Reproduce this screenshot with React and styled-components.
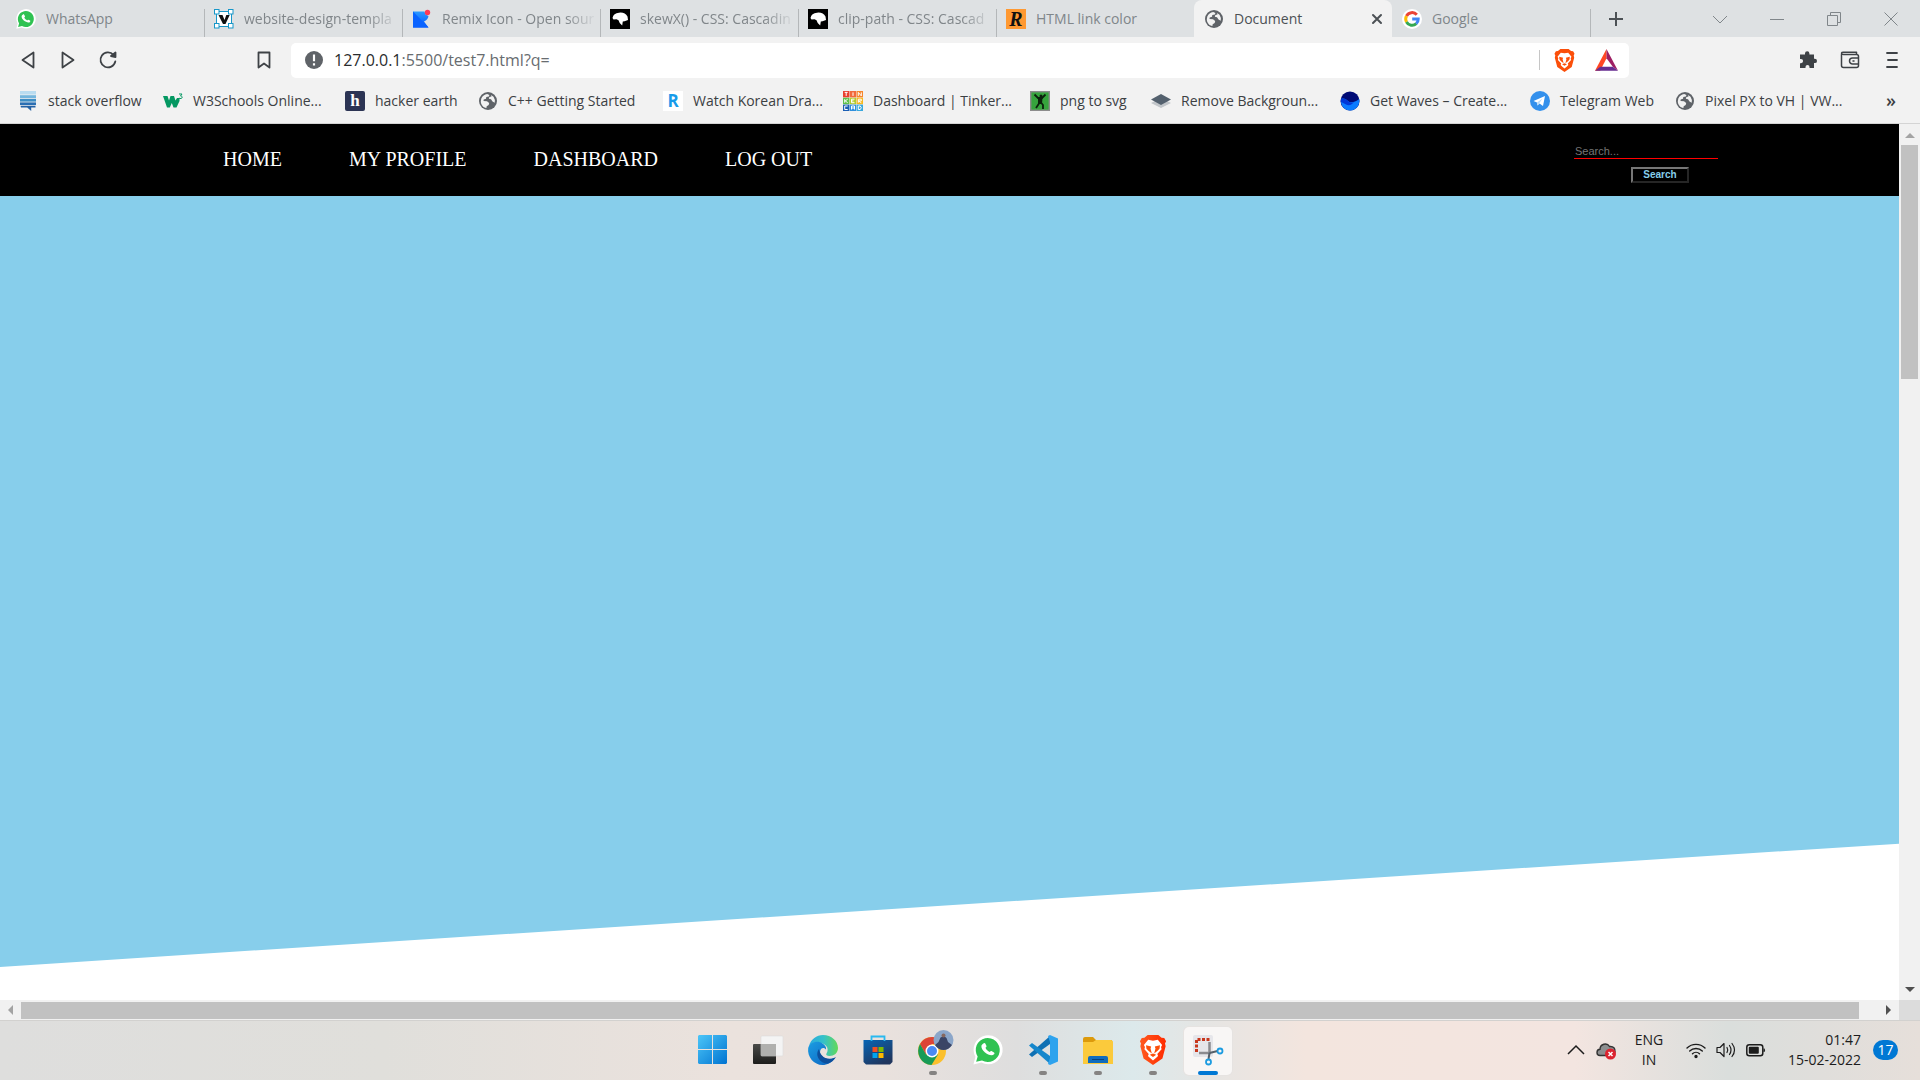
import React from "react";
import styled, { createGlobalStyle, css } from "styled-components";

const Global = createGlobalStyle`
  * { box-sizing: border-box; }
  html, body, #root { height: 100%; margin: 0; }
  body { overflow: hidden; background: #fff; }
  button { font: inherit; color: inherit; border: 0; padding: 0; background: none; }
  a { color: inherit; text-decoration: none; }
  svg { display: block; flex: none; overflow: visible; }
`;

const ui = css`font-family: "Segoe UI", "Open Sans", "Noto Sans", sans-serif;`;

const Screen = styled.div`
  display: flex;
  flex-direction: column;
  height: 100vh;
`;

/* ---------- browser chrome ---------- */
const TabBar = styled.header`
  ${ui}
  display: flex;
  align-items: stretch;
  height: 37px;
  padding: 0 1px 0 6px;
  background: #dee1e3;
  color: #80868a;
`;
const TabStrip = styled.nav`
  display: grid;
  grid-template-columns: repeat(8, minmax(0, 1fr));
  flex: 0 1 1584px;
  min-width: 0;
`;
const Tab = styled.div`
  display: flex;
  align-items: center;
  gap: 10px;
  min-width: 0;
  padding: 0 ${(p) => (p.$active ? 9 : 3)}px 0 10px;
  border-radius: ${(p) => (p.$active ? "8px 8px 0 0" : "0")};
  background: ${(p) => (p.$active ? "#f2f2f2" : "transparent")};
  color: ${(p) => (p.$active ? "#4c5155" : "inherit")};
  position: relative;
  &::after {
    content: "";
    display: ${(p) => (p.$line ? "block" : "none")};
    position: absolute;
    right: -1px;
    top: 9px;
    bottom: 0;
    width: 1px;
    background: #b4b7b9;
  }
`;
const TabTitle = styled.button`
  flex: 1;
  min-width: 0;
  overflow: hidden;
  white-space: nowrap;
  text-align: left;
  font-size: 14px;
  line-height: 22px;
  font-weight: ${(p) => (p.$active ? 500 : 400)};
  mask-image: ${(p) => (p.$fade ? "linear-gradient(90deg, #000 80%, transparent)" : "none")};
`;
const CloseTab = styled.button`
  display: flex;
`;
const NewTab = styled.button`
  display: grid;
  place-items: center;
  width: 52px;
`;
const WindowControls = styled.div`
  display: flex;
  margin-left: auto;
`;
const WindowButton = styled.button`
  display: grid;
  place-items: center;
  width: 57px;
`;

const Toolbar = styled.div`
  ${ui}
  display: flex;
  align-items: center;
  height: 46px;
  padding: 0 8px;
  background: #f2f2f2;
  color: #3e4246;
`;
const ToolButton = styled.button`
  display: grid;
  place-items: center;
  width: 40px;
  height: 36px;
`;
const BookmarkButton = styled(ToolButton)`
  margin-left: 116px;
`;
const AddressBar = styled.div`
  display: flex;
  align-items: center;
  flex: 0 1 1338px;
  height: 35px;
  margin-left: 7px;
  padding: 0 3px 0 14px;
  border-radius: 5px;
  background: #fff;
`;
const Url = styled.div`
  flex: 1;
  margin-left: 11px;
  font-size: 16px;
  line-height: 24px;
  color: #686c70;
  white-space: nowrap;
`;
const Host = styled.span`
  color: #2a2c2e;
`;
const Divider = styled.i`
  width: 1px;
  height: 20px;
  margin-right: 4px;
  background: #c6c6c6;
`;
const Shields = styled.div`
  display: flex;
  gap: 2px;
`;
const Extensions = styled.div`
  display: flex;
  gap: 2px;
  margin-left: auto;
`;

const Bookmarks = styled.nav`
  ${ui}
  display: flex;
  align-items: center;
  height: 41px;
  padding: 0 24px 4px 18px;
  background: #f2f2f2;
  border-bottom: 1px solid #d4d4d4;
  color: #3c4043;
  font-size: 14px;
  line-height: 20px;
`;
const Bookmark = styled.a`
  display: flex;
  align-items: center;
  gap: 10px;
  flex: 0 0 ${(p) => p.$w}px;
  white-space: nowrap;
`;
const More = styled.button`
  display: flex;
  margin-left: auto;
  padding-bottom: 2px;
  font-size: 18px;
  font-weight: 600;
  line-height: 20px;
`;

/* ---------- page ---------- */
const Viewport = styled.div`
  flex: 1;
  min-height: 0;
  display: grid;
  grid-template-columns: minmax(0, 1fr) 21px;
  grid-template-rows: minmax(0, 1fr) 20px;
`;
const Page = styled.main`
  display: flex;
  flex-direction: column;
  overflow: hidden;
  background: #fff;
  font-family: "Liberation Serif", "Times New Roman", serif;
`;
const SiteNav = styled.nav`
  display: flex;
  flex: none;
  justify-content: space-between;
  align-items: center;
  height: 72px;
  padding: 0 181px 0 223px;
  background: #000;
`;
const Links = styled.div`
  display: flex;
  gap: 67px;
  padding-bottom: 2px;
  color: #fff;
  font-size: 20px;
  line-height: 24px;
`;
const SearchForm = styled.form`
  display: flex;
  flex-direction: column;
  align-items: center;
  gap: 8px;
  width: 144px;
  padding-top: 6px;
  font-family: "Liberation Sans", Arial, sans-serif;
`;
const SearchInput = styled.input`
  width: 100%;
  height: 16px;
  padding: 0 1px;
  border: 0;
  border-bottom: 1px solid red;
  outline: 0;
  background: transparent;
  color: #fff;
  font: 11px/14px "Liberation Sans", Arial, sans-serif;
  &::placeholder { color: #757575; }
`;
const SearchButton = styled.button`
  width: 58px;
  height: 16px;
  margin-left: 28px;
  border: 2px solid;
  border-color: #767676 #262626 #262626 #767676;
  color: skyblue;
  font-size: 10px;
  line-height: 12px;
  font-weight: 700;
`;
const Hero = styled.section`
  height: 771px;
  flex: none;
  background: skyblue;
  clip-path: polygon(0 0, 100% 0, 100% 84%, 0 100%);
`;
const Scroll = styled.div`
  display: flex;
  flex-direction: ${(p) => (p.$row ? "row" : "column")};
  align-items: center;
  justify-content: space-between;
  background: #f1f1f1;
`;
const ScrollArrow = styled.button`
  display: grid;
  place-items: center;
  flex: 0 0 21px;
  color: ${(p) => (p.$dim ? "#a3a3a3" : "#505050")};
`;
const Track = styled.div`
  flex: 1;
  display: flex;
  flex-direction: ${(p) => (p.$row ? "row" : "column")};
`;
const Thumb = styled.div`
  background: #c1c1c1;
  ${(p) => (p.$row ? "width: 99%; height: 17px;" : "height: 28%; width: 17px;")}
`;
const Corner = styled.div`
  background: #dcdcdc;
`;

/* ---------- taskbar ---------- */
const Taskbar = styled.footer`
  ${ui}
  display: grid;
  grid-template-columns: 1fr auto 1fr;
  align-items: center;
  height: 60px;
  border-top: 1px solid #d2d1cf;
  background: linear-gradient(90deg, #dededd 0, #e0dfdb 20%, #ebe2dd 38%, #e9e1dd 46%, #dedede 53%, #dce9eb 59%, #e6e5e3 63%, #f3e5de 68%, #f3e5e0 82%, #dadedc 90%, #e0dedb 95%, #e6dfda 100%);
  color: #1c1c1c;
`;
const Apps = styled.div`
  grid-column: 2;
  display: flex;
  gap: 7px;
`;
const AppButton = styled.button`
  display: flex;
  flex-direction: column;
  align-items: center;
  justify-content: space-between;
  width: 48px;
  height: 48px;
  padding-top: 8px;
  border-radius: 5px;
  background: ${(p) => (p.$on ? "#f8f6f5" : "transparent")};
  box-shadow: ${(p) => (p.$on ? "0 0 0 1px #e6e3e1" : "none")};
`;
const Mark = styled.i`
  width: ${(p) => (p.$on ? 20 : 8)}px;
  height: 4px;
  border-radius: 2px;
  background: ${(p) => (p.$on ? "#0078d4" : p.$open ? "#858382" : "transparent")};
`;
const Tray = styled.div`
  display: flex;
  align-items: center;
  justify-content: flex-end;
  padding: 0 22px 2px 0;
  font-size: 14px;
  line-height: 20px;
`;
const TrayIcon = styled.button`
  display: grid;
  place-items: center;
  width: 30px;
`;
const Lang = styled.button`
  width: 56px;
  margin-right: 4px;
  text-align: center;
`;
const Clock = styled.time`
  width: 90px;
  text-align: right;
`;
const Badge = styled.span`
  width: 25px;
  height: 20px;
  margin-left: 12px;
  border-radius: 10px;
  background: #0078d4;
  color: #fff;
  text-align: center;
  font-size: 14px;
`;

/* ---------- drawings ---------- */
const Svg = ({ s = 20, w, h, box = "0 0 20 20", children, ...r }) => (
  <svg width={w || s} height={h || s} viewBox={box} fill="none" aria-hidden="true" {...r}>{children}</svg>
);
const Stroke = (p) => <Svg stroke="currentColor" strokeWidth="1.5" strokeLinecap="round" strokeLinejoin="round" {...p} />;

const phone = "M7 5.6c.4-.5.9-.4 1.2.1l.8 1.6c.1.4-.4.9-.7 1.2.6 1.3 1.6 2.3 2.9 2.9.4-.4.7-.9 1.1-.7l1.7.9c.5.3.3.9 0 1.3-2.1 2.2-8.8-2.2-8.4-5.6.1-.7.6-1.2 1.4-1.7z";
const Whatsapp = ({ s = 20 }) => (
  <Svg s={s}>
    <path d="M.3 19.700l1.300-5.200A9.700 9.700 0 1 1 5.600 18.400z" fill="#fff" />
    <path d="M2.100 17.900l1-3.600A8 8 0 1 1 6 17z" fill="#2fc252" />
    <path d={phone} fill="#fff" />
  </Svg>
);
const Globe = () => (
  <Svg>
    <circle cx="10" cy="10" r="9" fill="#5f6368" />
    <path d="M3.300 7.500C4.400 5 6.500 3.400 9.200 3.100l2.200.9-.5 1.600-2.600.5-.3 1.700-2.300.8-.2 1.300 3.500.4 2.200 1.800-.5 2-2 1.200-.3 1.800c-3.200-.5-5.600-3.200-5.600-6.800zM13 4l2.500 1.800 1.400 3.200-.2 2.700-2.200-1.100-1.500-2.400-2.200-.4.600-1.900 2.100-.3z" fill="#f2f2f2" />
  </Svg>
);
const Vecta = () => (
  <Svg>
    <rect x="2.500" y="2.500" width="15" height="15" fill="#fff" stroke="#1797c9" />
    {[[1, 1], [15, 1], [1, 15], [15, 15]].map(([x, y]) => <rect key={x + "-" + y} x={x - 0.5} y={y - 0.5} width="4.5" height="4.5" fill="#fff" stroke="#1797c9" />)}
    <path d="M4.500 6h4l2 5 1.800-5h3.400l-4.200 9H9z" fill="#111" />
  </Svg>
);
const Remix = () => (
  <Svg>
    <defs><linearGradient id="rx" x2="0" y2="1"><stop stopColor="#2d9bff" /><stop offset="1" stopColor="#0055ff" /></linearGradient></defs>
    <path d="M1 2.500h11.500q.5 3.500 4 4.500-.5 3.500-4.500 5.500l4.500 6H1z" fill="url(#rx)" />
    <path d="M1 2.500l15.500 16H1z" fill="#0a63ff" />
    <circle cx="15.500" cy="3.500" r="2.700" fill="#ff3b57" />
  </Svg>
);
const Mdn = () => (
  <Svg>
    <rect width="20" height="20" fill="#000" />
    <path d="M2.500 9Q3.500 4 9 3.700q6-.7 8.500 3.800l.5 3.500-3.500 1.300-1.700.2-.6 4q-2.700-1.500-3.700-5.300l-2-1-3 .3z" fill="#fff" />
  </Svg>
);
const GoogleIcon = () => (
  <Svg>
    <circle cx="10" cy="10" r="10" fill="#fff" />
    <g strokeWidth="3">
      <path d="M14.800 5.700A6.300 6.300 0 0 0 4.500 7" stroke="#ea4335" />
      <path d="M4.500 7a6.300 6.300 0 0 0 0 6" stroke="#fbbc05" />
      <path d="M4.500 13a6.300 6.300 0 0 0 9.800 1.700" stroke="#34a853" />
      <path d="M10.200 10h6a6.300 6.300 0 0 1-2 4.700" stroke="#4285f4" />
    </g>
  </Svg>
);
const GlyphTile = styled.span`
  display: grid;
  place-items: center;
  flex: none;
  width: 20px;
  height: 20px;
  border-radius: ${(p) => p.$r || 0}px;
  background: ${(p) => p.$bg};
  color: ${(p) => p.$fg};
  font: ${(p) => p.$font};
`;
const Lion = ({ s = 28, flat }) => (
  <Svg s={s} box="0 0 28 28">
    <defs><linearGradient id="lion"><stop stopColor="#ff5a1f" /><stop offset="1" stopColor="#ff2b00" /></linearGradient></defs>
    <path d="M9 0h10l3 2.500 2.500.3 1.700 3-1 2.200.6 2.500-3 11.500L14 28 5.200 22 2.200 10.500 2.800 8l-1-2.200 1.700-3L6 2.500z" fill={flat ? "#fb4f0a" : "url(#lion)"} />
    <path d="M9.500 4.500l4.500.8 4.500-.8 4 4.800-1 2 .5 2-4 4.500.7 1.700-1.700 1.700L14 23.800 11 21.200l-1.700-1.700.7-1.700-4-4.500.5-2-1-2z" fill="#fff" />
    <path d="M7.500 9.500l4.800 1.200-.6 1.800 1.200 4.800-3.200-2.500-1.800-2zM20.500 9.500l-4.800 1.200.6 1.800-1.200 4.800 3.200-2.500 1.800-2zM11 18.500l3-1.200 3 1.200-3 2z" fill="#fb4f0a" />
  </Svg>
);
const Bat = () => (
  <Svg s={23}>
    <path d="M10 0L0 19h4.500L10 8z" fill="#ff4724" />
    <path d="M10 0l10 19-4.500-3.500L10 8z" fill="#9e1f63" />
    <path d="M0 19l4.500-3.500h11L20 19z" fill="#662d91" />
  </Svg>
);
const StackIcon = () => (
  <Svg>
    <path d="M2 0h16v3.500H2z" fill="#b9dcf0" /><path d="M2 4.200h16v2.800H2z" fill="#74b6dd" />
    <path d="M2 7.800h16v2.800H2z" fill="#3d8ec5" /><path d="M2 11.400h16v2.600H2z" fill="#2a6fb3" />
    <path d="M2.500 14.800h15v1.700h-4.300V20l-4-3.500H3z" fill="#2462a5" />
  </Svg>
);
const W3 = () => (
  <Svg>
    <path d="M0 5h4.500l1.500 4.500L7.500 5h3.500l1.500 4.500L14 7h2.500v3l-3 6.500h-3L8.800 12l-2 4.500H4z" fill="#059862" />
    <path d="M16 3h3l-1.500 2c1 0 1.700.5 1.700 1.300 0 1.200-2 1.700-3.200.8" stroke="#059862" strokeWidth="1" />
  </Svg>
);
const Tinker = () => {
  const c = ["#e9402f", "#f26a3c", "#f7862c", "#5fc04a", "#b4cc2f", "#f7b71d", "#1c5fb4", "#2f8fdd", "#39a8dd"];
  const glyphs = ["M0 0h3M1.500 0v3.500", "M1.500 0v3.500", "M0 3.500V0l3 3.500V0", "M0 0v3.500M3 0L.5 1.700 3 3.500", "M3 0H0v3.500h3M0 1.700h2", "M0 3.500V0h3v1.700H0l3 1.800", "M3 0H0v3.500h3", "M0 3.500V0h3v3.500M0 2h3", "M0 0h2l1 1.700-1 1.800H0z"];
  return (
    <Svg>
      {c.map((f, i) => (
        <g key={i} transform={`translate(${(i % 3) * 6.8} ${Math.floor(i / 3) * 6.8})`}>
          <rect width="6.4" height="6.4" fill={f} />
          <path d={glyphs[i]} transform="translate(1.7 1.4)" stroke="#fff" />
        </g>
      ))}
    </Svg>
  );
};
const PngSvg = () => (
  <Svg>
    <rect x=".7" y=".7" width="18.6" height="18.6" fill="#36a43d" stroke="#8c8c8c" strokeWidth="1.4" />
    <circle cx="11" cy="5" r="1.500" fill="#0b210c" />
    <path d="M4.500 3.500L8 7h4l3.500-3.500M10 7v5M10 11l-4 6M10.500 11l2.500 3v4" stroke="#0b210c" strokeWidth="1.800" />
    <path d="M8 6.500h4.500L12 13H8z" fill="#0b210c" />
  </Svg>
);
const Layers = () => (
  <Svg>
    <path d="M10 7l10 5-10 5L0 12z" fill="#c2c6ca" />
    <path d="M10 3l10 5.500L10 14 0 8.500z" fill="#54616e" />
  </Svg>
);
const Waves = () => (
  <Svg>
    <circle cx="10" cy="10" r="9.5" fill="#000b76" />
    <path d="M1 8c3-1 5 0 7 2s6 2 11.300-2c.8 6-3 11.300-9 11.500C5 19.500 0 15 1 8z" fill="#0b7bff" />
    <path d="M1 8c3-1 5 0 7 2s4 2 6 1c-2 3-5 4-8 2.500S2 11 .8 11z" fill="#0038d8" />
  </Svg>
);
const Telegram = () => (
  <Svg>
    <circle cx="10" cy="10" r="10" fill="#3390ec" />
    <path d="M3.500 10l11.500-5-2 10-3.500-2.500L7.500 14.500 7 11.500z" fill="#fff" />
    <path d="M7 11.500l5.500-4-3.500 5-1.500 2z" fill="#b9d9f7" />
  </Svg>
);
const Arrow = ({ d }) => <Svg w={10} h={10} box="0 0 10 10"><path d={d} fill="currentColor" /></Svg>;

const tabs = [
  { t: "WhatsApp", i: <Whatsapp />, line: true },
  { t: "website-design-templa", i: <Vecta />, line: true, fade: true },
  { t: "Remix Icon - Open sour", i: <Remix />, line: true, fade: true },
  { t: "skewX() - CSS: Cascadin", i: <Mdn />, line: true, fade: true },
  { t: "clip-path - CSS: Cascad", i: <Mdn />, line: true, fade: true },
  { t: "HTML link color", i: <GlyphTile $bg="#ff9932" $fg="#111" $font='italic 700 20px/20px "Liberation Serif", serif'>R</GlyphTile> },
  { t: "Document", i: <Globe />, active: true },
  { t: "Google", i: <GoogleIcon />, line: true },
];
const bookmarks = [
  ["stack overflow", <StackIcon />, 145],
  ["W3Schools Online...", <W3 />, 182],
  ["hacker earth", <GlyphTile $r={2} $bg="#2c3454" $fg="#fff" $font='700 17px/20px "Liberation Serif", serif'>h</GlyphTile>, 133],
  ["C++ Getting Started", <Globe />, 185],
  ["Watch Korean Dra...", <GlyphTile $bg="#fff" $fg="#169bea" $font='700 17px/20px "Open Sans", sans-serif'>R</GlyphTile>, 180],
  ["Dashboard | Tinker...", <Tinker />, 187],
  ["png to svg", <PngSvg />, 121],
  ["Remove Backgroun...", <Layers />, 189],
  ["Get Waves – Create...", <Waves />, 190],
  ["Telegram Web", <Telegram />, 145],
  ["Pixel PX to VH | VW...", <Globe />, 180],
];

const Win = () => (
  <Svg s={29} box="0 0 29 29">
    <defs><linearGradient id="win" x2="1" y2="1"><stop stopColor="#4cc6f8" /><stop offset="1" stopColor="#0073d1" /></linearGradient></defs>
    <path d="M1 0h13v14H0V1zM15 0h13l1 1v13H15zM0 15h14v14H1l-1-1zM15 15h14v13l-1 1H15z" fill="url(#win)" />
  </Svg>
);
const TaskView = () => (
  <Svg s={30} box="0 0 30 30">
    <defs><linearGradient id="tv" x2="0" y2="1"><stop stopColor="#4a4a48" /><stop offset="1" stopColor="#1d1d1b" /></linearGradient></defs>
    <rect y="9" width="23" height="20" rx="1" fill="url(#tv)" />
    <rect x="8" y="1" width="22" height="20" rx="1" fill="#f4f4f4" stroke="#dcdcdc" strokeWidth=".6" />
    <path d="M8 9h15v12H8z" fill="#b0b0ae" />
  </Svg>
);
const Edge = () => (
  <Svg s={30} box="0 0 30 30">
    <defs>
      <linearGradient id="e1"><stop stopColor="#2aa9e0" /><stop offset=".5" stopColor="#35c1c9" /><stop offset="1" stopColor="#62d957" /></linearGradient>
      <linearGradient id="e2" x2="1" y2="1"><stop stopColor="#1b9de2" /><stop offset="1" stopColor="#0c62c0" /></linearGradient>
    </defs>
    <path d="M1 11C3 4 8.500 0 15 0c8.500 0 15 6 15 13 0 5-4 8-8.500 8-2.500 0-4-1-3-2.500 4-6-3-12-9-10C6 9 3 10 1 11z" fill="url(#e1)" />
    <path d="M.2 13C2 7 10 5 14.500 8.500 17 10 18.500 12 18 14.500c-4-4-7 1-5.500 4.500 2 5 9 6 14.500 4-3 4.500-8 7-12.500 7C6 30-1 22 .2 13z" fill="url(#e2)" />
    <path d="M11 14c-5 7 2 15 9 14.500 3-1 6-3 8-6.500-5 3-11 2-14-1.500-2-2-2.500-4-3-6.500z" fill="#0d4f9c" />
  </Svg>
);
const Store = () => (
  <Svg s={30} box="0 0 30 30">
    <defs><linearGradient id="st" x2=".6" y2="1"><stop stopColor="#0765b5" /><stop offset="1" stopColor="#20365e" /></linearGradient></defs>
    <path d="M.5 5h29v22l-2.500 2.500H3L.5 27z" fill="url(#st)" />
    <path d="M8.500 6V1.500h13V6" stroke="#28b9f0" strokeWidth="1.800" />
    <path d="M9.500 12h5v5h-5z" fill="#f25022" /><path d="M15.500 12h5v5h-5z" fill="#7fba00" />
    <path d="M9.500 18h5v5h-5z" fill="#00a4ef" /><path d="M15.500 18h5v5h-5z" fill="#ffb900" />
  </Svg>
);
const Chrome = () => (
  <Svg w={36} h={30} box="-3 5 36 30">
    <circle cx="14" cy="21" r="14" fill="#fbc02d" />
    <path d="M2 14a14 14 0 0 1 24.300 0H14l-6 10.500z" fill="#dc4437" />
    <path d="M2 14a14 14 0 0 0 11.500 21L20 24.500H8z" fill="#189b57" />
    <circle cx="14" cy="21" r="6.5" fill="#fff" /><circle cx="14" cy="21" r="5" fill="#4a8af4" />
    <circle cx="25.500" cy="10" r="10" fill="#8ba6c9" />
    <path d="M17 15l3.500-3 2-4.500 3.500-1.500 2.500 2 1.500 4 4 3c-2 3-5 5-8.500 5s-6.500-2-8.500-5z" fill="#3a4566" />
    <circle cx="25.500" cy="5.500" r="2" fill="#86685f" />
  </Svg>
);
const Code = () => (
  <Svg s={30} box="0 0 30 30">
    <path d="M22 1L1 19.500l3 2.500L22 9z" fill="#0f70b3" />
    <path d="M22 29L1 10.500l3-2.500 18 13z" fill="#1587cc" />
    <path d="M22 0l8 3.500v23L22 30l-2-1 2-6V7l-2-6z" fill="#2ea3ee" />
  </Svg>
);
const Folder = () => (
  <Svg s={30} box="0 0 30 30">
    <path d="M0 4q0-2 2-2h8l3 3h16v8H0z" fill="#dc9a0c" />
    <path d="M0 7h10l3-2h15.500L30 6.500V29H0z" fill="#fbca3c" />
    <path d="M5 28v-5q0-2 2-2h16q2 0 2 2v5z" fill="#0f6cbd" /><path d="M9 24.500h12" stroke="#06427c" />
  </Svg>
);
const Snip = () => (
  <Svg s={30} box="0 0 30 30">
    <rect x="0" y="0" width="20" height="22" rx="2" fill="#e6e6ea" />
    <path d="M3.500 17V4.500h13" stroke="#c8371c" strokeWidth="3" strokeDasharray="3 1.500" />
    <path d="M16.500 7v11H6" stroke="#8b8b8f" strokeWidth="2.500" />
    <path d="M16.500 18l8-2M16.500 18l-1 6" stroke="#55606a" strokeWidth="2" />
    <circle cx="27" cy="16" r="2.5" stroke="#1c9be0" strokeWidth="1.800" /><circle cx="15.500" cy="27" r="2.5" stroke="#1c9be0" strokeWidth="1.800" />
  </Svg>
);
const apps = [
  ["Start", <Win />], ["Task View", <TaskView />], ["Edge", <Edge />], ["Store", <Store />],
  ["Chrome", <Chrome />, "open"], ["WhatsApp", <Whatsapp s={30} />], ["Visual Studio Code", <Code />, "open"],
  ["File Explorer", <Folder />, "open"], ["Brave", <Lion s={30} />, "open"], ["Snipping Tool", <Snip />, "on"],
];

export default function App() {
  return (
    <Screen>
      <Global />
      <TabBar>
        <TabStrip>
          {tabs.map((t) => (
            <Tab key={t.t} $active={t.active} $line={t.line}>
              {t.i}
              <TabTitle $active={t.active} $fade={t.fade}>{t.t}</TabTitle>
              {t.active && (
                <CloseTab aria-label="Close tab"><Stroke s={12} box="0 0 12 12" strokeWidth="2"><path d="M2 2l8 8M10 2l-8 8" /></Stroke></CloseTab>
              )}
            </Tab>
          ))}
        </TabStrip>
        <NewTab aria-label="New tab"><Svg s={16} box="0 0 16 16" stroke="#4c5155" strokeWidth="2"><path d="M8 1v14M1 8h14" /></Svg></NewTab>
        <WindowControls>
          <WindowButton aria-label="Search tabs"><Svg s={14} box="0 0 14 14" stroke="currentColor"><path d="M0 4l7 7 7-7" /></Svg></WindowButton>
          <WindowButton aria-label="Minimise"><Svg s={14} box="0 0 14 14" stroke="currentColor"><path d="M0 7.500h14" /></Svg></WindowButton>
          <WindowButton aria-label="Restore"><Svg s={14} box="0 0 14 14" stroke="currentColor"><path d="M.5 3.500h10v10H.5zM3.500 3V.5h10v10H11" /></Svg></WindowButton>
          <WindowButton aria-label="Close"><Svg s={14} box="0 0 14 14" stroke="currentColor"><path d="M.5.5l13 13M13.500.5l-13 13" /></Svg></WindowButton>
        </WindowControls>
      </TabBar>
      <Toolbar>
        <ToolButton aria-label="Back"><Stroke strokeWidth="1.800"><path d="M15.500 2.500v15L4.500 10z" /></Stroke></ToolButton>
        <ToolButton aria-label="Forward"><Stroke strokeWidth="1.800"><path d="M4.500 2.500v15l11-7.500z" /></Stroke></ToolButton>
        <ToolButton aria-label="Reload">
          <Stroke strokeWidth="1.800"><path d="M15.500 4.800A7.500 7.500 0 1 0 17.300 11.500" /><path d="M13 6l4.500-3.500V7z" fill="currentColor" /></Stroke>
        </ToolButton>
        <BookmarkButton aria-label="Bookmark this page"><Stroke strokeWidth="1.800"><path d="M4.500 2.500h11v15L10 13.500l-5.500 4z" /></Stroke></BookmarkButton>
        <AddressBar>
          <Svg s={18}><circle cx="10" cy="10" r="10" fill="#5f6368" /><path d="M10 4v7.500M10 13.500V16" stroke="#fff" strokeWidth="2.400" /></Svg>
          <Url><Host>127.0.0.1</Host>:5500/test7.html?q=</Url>
          <Divider />
          <Shields>
            <ToolButton aria-label="Brave Shields"><Lion s={23} flat /></ToolButton>
            <ToolButton aria-label="Brave Rewards"><Bat /></ToolButton>
          </Shields>
        </AddressBar>
        <Extensions>
          <ToolButton aria-label="Extensions">
            <Svg><path d="M7 3.500a2.200 2.200 0 0 1 4.400 0V4.500h4.600v4.200h.8a2.200 2.200 0 0 1 0 4.400H16V18h-4.500v-1a2 2 0 0 0-4 0v1H2v-4.800h1a2 2 0 0 0 0-4.200H2V4.500h5z" fill="currentColor" /></Svg>
          </ToolButton>
          <ToolButton aria-label="Wallet">
            <Stroke><path d="M1.500 4.500v11q0 2 2 2h13q2 0 2-2v-9q0-2-2-2h-13q-2 0-2-1.200T3.500 2.200h13V4.500M18.500 8h-6a3 3 0 0 0 0 6h6M13 11h1" /></Stroke>
          </ToolButton>
          <ToolButton aria-label="Menu"><Stroke strokeWidth="1.800"><path d="M5 3h10M6 10h9M5 17h10" /></Stroke></ToolButton>
        </Extensions>
      </Toolbar>
      <Bookmarks>
        {bookmarks.map(([name, icon, w]) => (
          <Bookmark key={name} href="#" $w={w}>{icon}<span>{name}</span></Bookmark>
        ))}
        <More>»</More>
      </Bookmarks>

      <Viewport>
        <Page>
          <SiteNav>
            <Links>
              <a href="#">HOME</a><a href="#">MY PROFILE</a><a href="#">DASHBOARD</a><a href="#">LOG OUT</a>
            </Links>
            <SearchForm onSubmit={(e) => e.preventDefault()}>
              <SearchInput name="q" aria-label="Search" placeholder="Search..." />
              <SearchButton>Search</SearchButton>
            </SearchForm>
          </SiteNav>
          <Hero />
        </Page>
        <Scroll>
          <ScrollArrow $dim aria-label="Scroll up"><Arrow d="M0 8l5-5 5 5z" /></ScrollArrow>
          <Track><Thumb /></Track>
          <ScrollArrow aria-label="Scroll down"><Arrow d="M0 2l5 5 5-5z" /></ScrollArrow>
        </Scroll>
        <Scroll $row>
          <ScrollArrow $dim aria-label="Scroll left"><Arrow d="M7 0L2 5l5 5z" /></ScrollArrow>
          <Track $row><Thumb $row /></Track>
          <ScrollArrow aria-label="Scroll right"><Arrow d="M2 0l5 5-5 5z" /></ScrollArrow>
        </Scroll>
        <Corner />
      </Viewport>

      <Taskbar>
        <Apps>
          {apps.map(([name, icon, state]) => (
            <AppButton key={name} aria-label={name} $on={state === "on"}>
              {icon}
              <Mark $on={state === "on"} $open={state === "open"} />
            </AppButton>
          ))}
        </Apps>
        <Tray>
          <TrayIcon aria-label="Show hidden icons"><Svg w={16} h={16} box="0 0 16 16" stroke="currentColor" strokeWidth="1.500"><path d="M0 12l8-8 8 8" /></Svg></TrayIcon>
          <TrayIcon aria-label="OneDrive">
            <Svg>
              <path d="M4 15.500C0 15.500 0 9.500 4 9.300 4 4 11 2 13.500 6.500c4-.5 6 2 5.500 5.500l-2 3.500z" fill="#8d8f90" stroke="#333" strokeWidth="1.400" />
              <circle cx="14.500" cy="14" r="5.5" fill="#dc2430" /><path d="M12.500 12l4 4M16.500 12l-4 4" stroke="#fff" strokeWidth="1.500" />
            </Svg>
          </TrayIcon>
          <Lang>ENG<br />IN</Lang>
          <TrayIcon aria-label="Wi-Fi">
            <Stroke strokeWidth="1.400"><path d="M1 8a13 13 0 0 1 18 0M3.700 11a9 9 0 0 1 12.600 0M6.500 13.800a5 5 0 0 1 7 0" /><circle cx="10" cy="16.500" r="1" fill="currentColor" /></Stroke>
          </TrayIcon>
          <TrayIcon aria-label="Volume">
            <Stroke strokeWidth="1.200"><path d="M1 7.500v5h3l4 4v-13l-4 4zM11 7.500q1.500 2.500 0 5M13.500 5.500q3 4.500 0 9M16 3.500q5 6.500 0 13" /></Stroke>
          </TrayIcon>
          <TrayIcon aria-label="Battery">
            <Svg><rect x=".8" y="4.8" width="16" height="11" rx="2.5" stroke="currentColor" strokeWidth="1.500" /><rect x="2.8" y="6.8" width="10" height="7" rx="1" fill="currentColor" /><path d="M17.500 8.500h1q1.200 1.500 0 3.500h-1z" fill="currentColor" /></Svg>
          </TrayIcon>
          <Clock>01:47<br />15-02-2022</Clock>
          <Badge>17</Badge>
        </Tray>
      </Taskbar>
    </Screen>
  );
}
